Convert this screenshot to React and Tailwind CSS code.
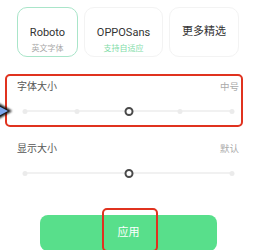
function Track({ stops, value }) {
  return (
    <div className="relative h-[10px] w-[207px]">
      <div className="absolute left-0 right-0 top-[4px] h-[2px] rounded-full bg-[#f1f1f1]" />
      {stops.map((s) => (
        <div
          key={s}
          className="absolute top-[2.5px] h-[5px] w-[5px] -translate-x-1/2 rounded-full bg-[#ebebeb]"
          style={{ left: s + "%" }}
        />
      ))}
      <div
        className="absolute top-[0.5px] h-[9px] w-[9px] -translate-x-1/2 rounded-full border-2 border-[#4a4a4a] bg-white"
        style={{ left: value + "%" }}
      />
    </div>
  );
}

function FontCard({ title, sub, subClass, active, width }) {
  return (
    <div
      className={
        "flex h-[50px] flex-col items-center rounded-[10px] border bg-white " +
        (sub ? "pt-[18px] " : "justify-center ") +
        (active ? "border-[#a9e5c9]" : "border-[#f3f3f3]")
      }
      style={{ width }}
    >
      <div className="text-[11px] leading-[14px] text-[#333]">{title}</div>
      {sub && <div className={"mt-[4px] text-[8px] leading-[10px] " + subClass}>{sub}</div>}
    </div>
  );
}

export default function App() {
  return (
    <div
      className="relative h-[250px] w-[254px] overflow-hidden bg-white"
      style={{ fontFamily: 'Roboto, "Noto Sans CJK SC", sans-serif' }}
    >
      <div className="flex gap-[6px] pl-[17px] pt-[7px]">
        <FontCard title="Roboto" sub="英文字体" subClass="text-[#a8a8a8]" active width={61} />
        <FontCard title="OPPOSans" sub="支持自适应" subClass="text-[#7fdca8]" width={79} />
        <FontCard title="更多精选" width={70} />
      </div>

      <div className="ml-[5px] mt-[17px] h-[53px] w-[238px] rounded-[5px] border-2 border-[#e0321f]">
        <div className="flex items-center justify-between pl-[10px] pr-[2px] pt-[4px] text-[10px] leading-[14px]">
          <span className="text-[#555]">字体大小</span>
          <span className="text-[9.5px] text-[#aaa]">中号</span>
        </div>
        <div className="ml-[18px] mt-[12px]">
          <Track stops={[0, 25, 75, 100]} value={50} />
        </div>
      </div>

      <div className="flex items-center justify-between pl-[17px] pr-[15px] pt-[15px] text-[10px] leading-[14px]">
        <span className="text-[#555]">显示大小</span>
        <span className="text-[9.5px] text-[#aaa]">默认</span>
      </div>
      <div className="ml-[25px] mt-[12px]">
        <Track stops={[0, 100]} value={50} />
      </div>

      <div className="ml-[40px] mt-[37px] flex h-[36px] w-[177px] items-center justify-center rounded-[8px] bg-[#58df8b] text-[11px] text-white">
        应用
      </div>

      <div className="absolute left-[102px] top-[208px] h-[44px] w-[56px] rounded-[5px] border-2 border-[#e0321f]" />

      <svg className="absolute left-0 top-[100px]" width="16" height="22" viewBox="0 0 16 22">
        <defs>
          <filter id="b" x="-50%" y="-50%" width="200%" height="200%">
            <feGaussianBlur stdDeviation="0.8" />
          </filter>
        </defs>
        <polygon points="-5,1 12,11 -5,21" fill="#111" filter="url(#b)" />
        <polygon points="-5,4 8,11 -5,18" fill="#7ba6ee" />
      </svg>
    </div>
  );
}
